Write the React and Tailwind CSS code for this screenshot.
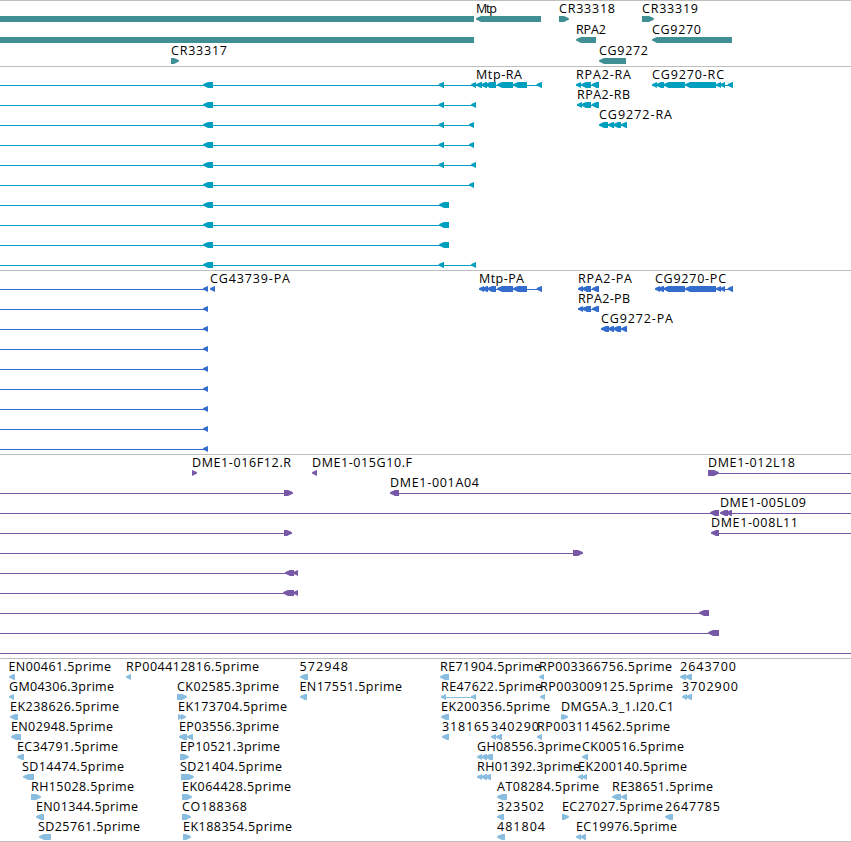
// Span formats:
//   line:  [from, to]
//   glyph: [from, to, direction], "L" and "R" are arrows, "B" is a plain bar
//   label: [text, from, to]
const exonsMtp = [[497, 513, "L"], [513, 527, "L"], [536.5, 542, "L"]];
const exonsCG9270 = [
    [663.5, 685, "L"],
    [685, 716, "L"],
    [716, 721, "L"],
    [720, 725, "L"],
    [727.5, 733, "L"],
];

const genes = [
    {
        glyphs: [[0, 474, "B"], [476, 541, "L"], [559, 569, "R"], [642, 654, "R"]],
        labels: [["Mtp", 476, 497], ["CR33318", 559, 615], ["CR33319", 642, 698]],
    },
    {
        glyphs: [[0, 474, "B"], [576, 596, "L"], [652, 732, "L"]],
        labels: [["RPA2", 576, 606], ["CG9270", 652, 701]],
    },
    {
        glyphs: [[171, 179, "R"], [599, 626, "L"]],
        labels: [["CR33317", 171, 227], ["CG9272", 599, 648]],
    },
];

const transcripts = [
    {
        lines: [[0, 542], [576, 599], [652, 733]],
        glyphs: [
            [203, 213, "L"],
            [438.5, 444, "L"],
            [471, 476, "L"],
            [476, 482, "L"],
            [481, 487, "L"],
            [485, 496, "L"],
            ...exonsMtp,
            [576, 581, "L"],
            [581, 591, "L"],
            [591.5, 599, "L"],
            [652, 657, "L"],
            [656, 664, "L"],
            ...exonsCG9270,
        ],
        labels: [["Mtp-RA", 476, 522], ["RPA2-RA", 576, 631], ["CG9270-RC", 652, 724]],
    },
    {
        lines: [[0, 476], [577, 599]],
        glyphs: [
            [203, 213, "L"],
            [438.5, 444, "L"],
            [471, 476, "L"],
            [577, 582, "L"],
            [581, 591, "L"],
            [591.5, 599, "L"],
        ],
        labels: [["RPA2-RB", 577, 630]],
    },
    {
        lines: [[0, 474], [599, 627]],
        glyphs: [
            [203, 213, "L"],
            [438.5, 444, "L"],
            [469, 474, "L"],
            [599, 608, "L"],
            [608, 614, "L"],
            [613, 621, "L"],
            [621, 627, "L"],
        ],
        labels: [["CG9272-RA", 599, 672]],
    },
    { lines: [[0, 474]], glyphs: [[203, 213, "L"], [438.5, 444, "L"], [469, 474, "L"]] },
    { lines: [[0, 476]], glyphs: [[203, 213, "L"], [438.5, 444, "L"], [471, 476, "L"]] },
    { lines: [[0, 474]], glyphs: [[203, 213, "L"], [469, 474, "L"]] },
    { lines: [[0, 449]], glyphs: [[203, 213, "L"], [439, 449, "L"]] },
    { lines: [[0, 449]], glyphs: [[203, 213, "L"], [439, 449, "L"]] },
    { lines: [[0, 449]], glyphs: [[203, 213, "L"], [439, 449, "L"]] },
    { lines: [[0, 476]], glyphs: [[203, 213, "L"], [438.5, 444, "L"], [471, 476, "L"]] },
];

const shortCds = { lines: [[0, 208]], glyphs: [[203, 208, "L"]] };

const proteins = [
    {
        lines: [[0, 208], [479, 542], [578, 599], [655, 733]],
        glyphs: [
            [203, 208, "L"],
            [210, 215, "L"],
            [479, 484, "L"],
            [482, 488, "L"],
            [487, 496, "L"],
            ...exonsMtp,
            [578, 583, "L"],
            [582, 591, "L"],
            [592, 599, "L"],
            [655, 660, "L"],
            [658, 664, "L"],
            ...exonsCG9270,
        ],
        labels: [
            ["CG43739-PA", 210, 290],
            ["Mtp-PA", 479, 524],
            ["RPA2-PA", 578, 632],
            ["CG9270-PC", 655, 726],
        ],
    },
    {
        lines: [[0, 208], [578, 599]],
        glyphs: [[203, 208, "L"], [578, 583, "L"], [582, 591, "L"], [592, 599, "L"]],
        labels: [["RPA2-PB", 578, 630]],
    },
    {
        lines: [[0, 208], [601, 627]],
        glyphs: [
            [203, 208, "L"],
            [601, 609, "L"],
            [608, 614, "L"],
            [613, 621, "L"],
            [621, 627, "L"],
        ],
        labels: [["CG9272-PA", 601, 673]],
    },
    shortCds,
    shortCds,
    shortCds,
    shortCds,
    shortCds,
    shortCds,
];

const clones = [
    {
        lines: [[708, 851]],
        glyphs: [[192, 197, "R"], [312, 317, "L"], [708, 719, "R"]],
        labels: [
            ["DME1-016F12.R", 192, 291],
            ["DME1-015G10.F", 312, 412],
            ["DME1-012L18", 708, 795],
        ],
    },
    {
        lines: [[0, 293], [390, 851]],
        glyphs: [[284, 293, "R"], [390, 399, "L"]],
        labels: [["DME1-001A04", 390, 479]],
    },
    {
        lines: [[0, 719], [720, 851]],
        glyphs: [[710, 719, "L"], [720, 728, "L"], [726, 732, "L"]],
        labels: [["DME1-005L09", 720, 806]],
    },
    {
        lines: [[0, 292], [711, 851]],
        glyphs: [[284, 292, "R"], [711, 719, "L"]],
        labels: [["DME1-008L11", 711, 798]],
    },
    { lines: [[0, 583]], glyphs: [[573, 583, "R"]] },
    { lines: [[0, 298]], glyphs: [[285, 294, "L"], [293, 298, "L"]] },
    { lines: [[0, 298]], glyphs: [[283, 294, "L"], [293, 298, "L"]] },
    { lines: [[0, 709]], glyphs: [[699, 709, "L"]] },
    { lines: [[0, 719]], glyphs: [[708, 719, "L"]] },
    { lines: [[0, 851]] },
];

const ests = [
    {
        glyphs: [
            [9, 15, "L"],
            [126, 131, "L"],
            [300, 308, "L"],
            [440, 449, "L"],
            [539, 544, "L"],
            [680, 686, "L"],
            [685, 692, "L"],
        ],
        labels: [
            ["EN00461.5prime", 8.5, 111],
            ["RP004412816.5prime", 126, 259],
            ["572948", 299.5, 348],
            ["RE71904.5prime", 440, 541],
            ["RP003366756.5prime", 539, 672],
            ["2643700", 680, 736],
        ],
    },
    {
        lines: [[441, 476]],
        glyphs: [
            [9, 14, "L"],
            [177, 187, "R"],
            [300, 307, "L"],
            [441, 446, "L"],
            [471, 476, "L"],
            [540, 545, "L"],
            [682, 687, "L"],
            [686, 692, "L"],
        ],
        labels: [
            ["GM04306.3prime", 9, 114],
            ["CK02585.3prime", 177, 279],
            ["EN17551.5prime", 299.5, 402],
            ["RE47622.5prime", 441, 542],
            ["RP003009125.5prime", 540, 673],
            ["3702900", 682, 738],
        ],
    },
    {
        glyphs: [
            [10, 18, "L"],
            [178, 183, "R"],
            [181, 186, "R"],
            [441, 449, "L"],
            [561, 566, "R"],
            [563, 568, "R"],
        ],
        labels: [
            ["EK238626.5prime", 10, 119],
            ["EK173704.5prime", 178, 287],
            ["EK200356.5prime", 441, 550],
            ["DMG5A.3_1.I20.C1", 561, 674],
        ],
    },
    {
        glyphs: [
            [11, 21, "L"],
            [179, 187, "L"],
            [187, 193, "L"],
            [442, 449, "L"],
            [491, 496, "L"],
            [496, 502, "L"],
            [537, 542, "L"],
        ],
        labels: [
            ["EN02948.5prime", 11, 113],
            ["EP03556.3prime", 179, 279],
            ["318165", 442, 489],
            ["340290", 491, 539],
            ["RP003114562.5prime", 537, 670],
        ],
    },
    {
        glyphs: [
            [17, 24, "L"],
            [180, 189, "R"],
            [477, 482, "L"],
            [481, 487, "L"],
            [485, 493, "L"],
            [582, 588, "L"],
        ],
        labels: [
            ["EC34791.5prime", 17, 118],
            ["EP10521.3prime", 180, 280],
            ["GH08556.3prime", 477, 581],
            ["CK00516.5prime", 582, 684],
        ],
    },
    {
        glyphs: [
            [23, 34, "L"],
            [181, 194, "R"],
            [477, 482, "L"],
            [481, 487, "L"],
            [485, 491, "L"],
            [578, 583, "L"],
            [582, 587, "L"],
        ],
        labels: [
            ["SD14474.5prime", 22, 124],
            ["SD21404.5prime", 180, 282],
            ["RH01392.3prime", 477, 580],
            ["EK200140.5prime", 578, 687],
        ],
    },
    {
        glyphs: [
            [31, 41, "R"],
            [182, 192, "R"],
            [497, 507, "L"],
            [612, 621, "L"],
            [621, 627, "L"],
        ],
        labels: [
            ["RH15028.5prime", 31, 134],
            ["EK064428.5prime", 182, 291],
            ["AT08284.5prime", 497, 599],
            ["RE38651.5prime", 612, 713],
        ],
    },
    {
        glyphs: [
            [36, 44, "L"],
            [182, 191, "R"],
            [497, 504, "L"],
            [562, 569, "R"],
            [665, 673, "L"],
        ],
        labels: [
            ["EN01344.5prime", 36, 138],
            ["CO188368", 182, 247],
            ["323502", 497, 544],
            ["EC27027.5prime", 562, 663],
            ["2647785", 665, 720],
        ],
    },
    {
        glyphs: [
            [39, 51, "L"],
            [183, 191, "R"],
            [497, 505, "L"],
            [576, 581, "L"],
            [580, 586, "L"],
        ],
        labels: [
            ["SD25761.5prime", 38, 140],
            ["EK188354.5prime", 183, 292],
            ["481804", 497, 545],
            ["EC19976.5prime", 576, 677],
        ],
    },
];

const tracks = [
    { id: "genes", rows: genes, pitch: 21, height: "h-[66px]", color: "text-[#408f94]" },
    { id: "transcripts", rows: transcripts, pitch: 20, height: "h-[204px]", color: "text-[#009fbf]" },
    { id: "proteins", rows: proteins, pitch: 20, height: "h-[184px]", color: "text-[#326ccc]" },
    { id: "clones", rows: clones, pitch: 20, height: "h-[204px]", color: "text-[#7658a6]" },
    { id: "ests", rows: ests, pitch: 20, height: "h-[183px]", color: "text-[#88bddf]" },
];

const Glyph = ({ from, to, dir }) => {
    if (dir === "B") {
        return <rect x={from} y={15} width={to - from} height={6} />;
    }
    // s mirrors the head: tip and back swap sides for right arrows
    const s = dir === "L" ? 1 : -1;
    const tip = dir === "L" ? from : to;
    const back = dir === "L" ? to : from;
    const neck = tip + s * Math.min(5, to - from);
    const mid = tip + s * 2;
    return (
        <polygon
            points={`${tip},17.6 ${mid},16.2 ${neck},15 ${back},15 ${back},21 ${neck},21 ${mid},19.6 ${tip},18.4`}
        />
    );
};

const Row = ({ row, y }) => {
    const { lines = [], glyphs = [], labels = [] } = row;

    return (
        <g transform={`translate(0 ${y})`}>
            {lines.map(([from, to]) => (
                <rect key={from} x={from} y={18} width={to - from} height={1} />
            ))}
            {glyphs.map(([from, to, dir]) => (
                <Glyph key={from} from={from} to={to} dir={dir} />
            ))}
            {labels.map(([text, from, to]) => (
                <text
                    key={text}
                    x={from}
                    y={12}
                    textLength={to - from}
                    className="fill-black"
                >
                    {text}
                </text>
            ))}
        </g>
    );
};

const Track = ({ track }) => (
    <section className={`border-t border-[#bebebe] ${track.height} ${track.color}`}>
        <svg className="block w-full h-full fill-current text-inherit">
            {track.rows.map((row, index) => (
                <Row key={index} row={row} y={index * track.pitch} />
            ))}
        </svg>
    </section>
);

const App = () => {
    return (
        <main className="flex flex-col w-[851px] h-[842px] overflow-hidden bg-white border-b border-[#bebebe] font-['Open_Sans',sans-serif] text-[12.5px]">
            {tracks.map((track) => (
                <Track key={track.id} track={track} />
            ))}
        </main>
    );
};

export default App;
